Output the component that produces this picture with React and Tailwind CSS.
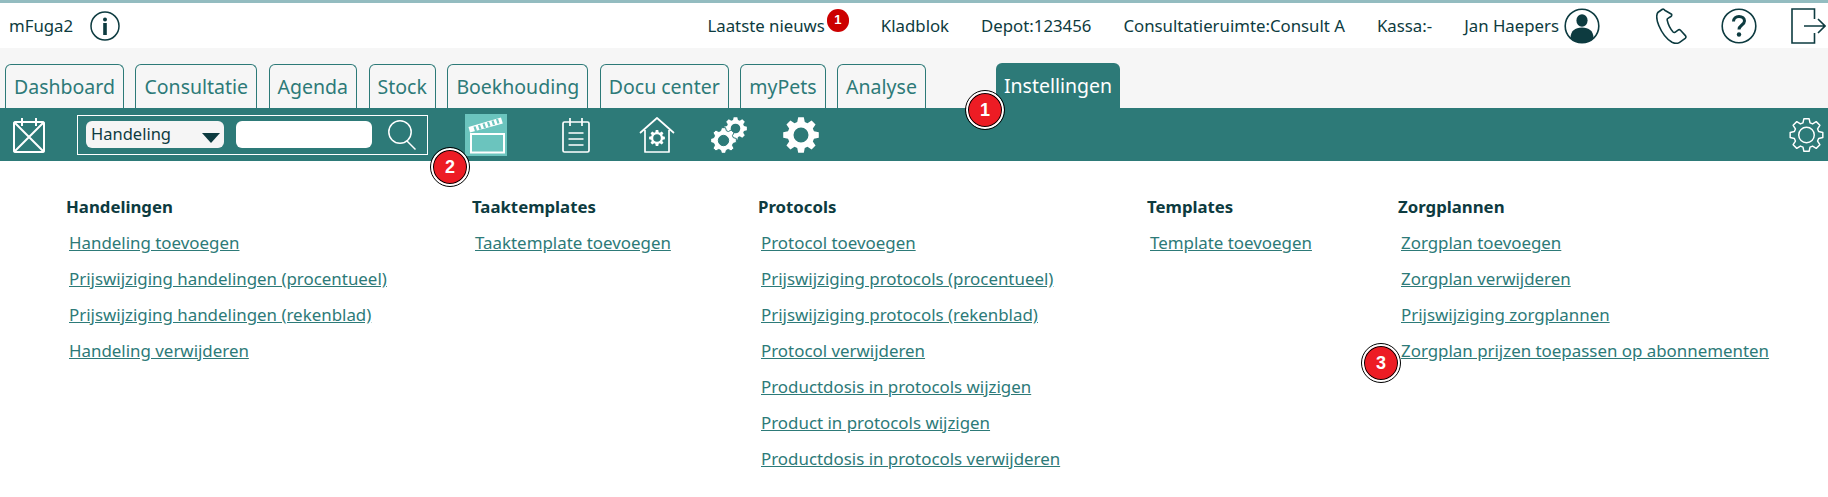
const tabs = [
  "Dashboard",
  "Consultatie",
  "Agenda",
  "Stock",
  "Boekhouding",
  "Docu center",
  "myPets",
  "Analyse",
];

const columns = [
  {
    title: "Handelingen",
    width: "w-[406px]",
    links: [
      "Handeling toevoegen",
      "Prijswijziging handelingen (procentueel)",
      "Prijswijziging handelingen (rekenblad)",
      "Handeling verwijderen",
    ],
  },
  {
    title: "Taaktemplates",
    width: "w-[286px]",
    links: ["Taaktemplate toevoegen"],
  },
  {
    title: "Protocols",
    width: "w-[389px]",
    links: [
      "Protocol toevoegen",
      "Prijswijziging protocols (procentueel)",
      "Prijswijziging protocols (rekenblad)",
      "Protocol verwijderen",
      "Productdosis in protocols wijzigen",
      "Product in protocols wijzigen",
      "Productdosis in protocols verwijderen",
    ],
  },
  {
    title: "Templates",
    width: "w-[251px]",
    links: ["Template toevoegen"],
  },
  {
    title: "Zorgplannen",
    width: "w-[400px]",
    links: [
      "Zorgplan toevoegen",
      "Zorgplan verwijderen",
      "Prijswijziging zorgplannen",
      "Zorgplan prijzen toepassen op abonnementen",
    ],
  },
];

// tooth outline for all the gear icons
function gearPath(cx, cy, outer, inner, teeth) {
  const step = (Math.PI * 2) / teeth;
  let d = "";
  for (let i = 0; i < teeth; i++) {
    const a = i * step - Math.PI / 2;
    const pts = [
      [inner, a - step * 0.36],
      [outer, a - step * 0.2],
      [outer, a + step * 0.2],
      [inner, a + step * 0.36],
    ];
    pts.forEach(([r, t], j) => {
      const x = (cx + r * Math.cos(t)).toFixed(2);
      const y = (cy + r * Math.sin(t)).toFixed(2);
      d += `${i === 0 && j === 0 ? "M" : "L"}${x} ${y} `;
    });
  }
  return d + "Z";
}

function hole(cx, cy, r) {
  return `M${cx - r} ${cy} a${r} ${r} 0 1 0 ${r * 2} 0 a${r} ${r} 0 1 0 ${-r * 2} 0 Z`;
}

function Marker({ n, className }) {
  return (
    <div
      className={`absolute flex h-[38px] w-[38px] items-center justify-center rounded-full border-2 border-white bg-[#ed1c24] font-['Liberation_Sans',sans-serif] text-[18px] font-bold text-white outline outline-1 outline-black ring-1 ring-inset ring-black ${className}`}
    >
      {n}
    </div>
  );
}

function InfoIcon() {
  return (
    <svg width="30" height="30" viewBox="0 0 30 30" fill="none" className="text-[#0d3b40]">
      <circle cx="15" cy="15" r="14" stroke="currentColor" strokeWidth="1.5" />
      <circle cx="15" cy="8.5" r="2" fill="currentColor" />
      <rect x="13.2" y="12" width="3.6" height="12" fill="currentColor" />
    </svg>
  );
}

function UserIcon() {
  return (
    <svg width="36" height="36" viewBox="0 0 36 36" fill="none" className="text-[#0d3b40]">
      <circle cx="18" cy="18" r="16.8" stroke="currentColor" strokeWidth="1.6" />
      <ellipse cx="18" cy="12.5" rx="5.6" ry="6.2" fill="currentColor" />
      <path d="M6.5 30c0-7 4.5-10.5 11.5-10.5S29.500 23 29.500 30c-3 3.200-7 5-11.500 5s-8.500-1.800-11.500-5Z" fill="currentColor" />
    </svg>
  );
}

function PhoneIcon() {
  return (
    <svg width="31" height="36" viewBox="0 0 31 36" fill="none" stroke="#0d3b40" strokeWidth="1.6" strokeLinejoin="round">
      <path d="M6 1.500 1.800 4.500C.2 7 .6 12 2.800 17.500c2.700 6.500 7.700 13.500 13.200 16.800 2.800 1.500 6 1.200 8-.2l5.200-3.800c1-.8 1-1.800.2-2.700l-4.900-5.300c-.8-.8-1.700-.8-2.500-.2l-3 2.200c-.7.4-1.300.3-1.900-.3-2.200-2.400-5.200-8.500-5.900-11.800-.2-.9 0-1.400.7-1.800l3-1.900c.9-.6 1-1.400.7-2.300L8.700 2.300C8.200 1 7 .8 6 1.500Z" />
    </svg>
  );
}

function QuestionIcon() {
  return (
    <svg width="36" height="36" viewBox="0 0 36 36" fill="none" className="text-[#0d3b40]">
      <circle cx="18" cy="18" r="16.800" stroke="currentColor" strokeWidth="1.6" />
      <path d="M12.500 13.500c0-3.200 2.300-5 5.500-5 3.300 0 5.500 1.800 5.500 4.500 0 4-5.500 4-5.500 8.500" stroke="currentColor" strokeWidth="3" />
      <circle cx="18" cy="26.500" r="2.200" fill="currentColor" />
    </svg>
  );
}

function LogoutIcon() {
  return (
    <svg width="35" height="36" viewBox="0 0 35 36" fill="none" stroke="#0d3b40" strokeWidth="1.6">
      <path d="M23.500 11V1H1v34h22.500V25" />
      <path d="M13 18h21M27 11l7 7-7 7" />
    </svg>
  );
}

function CalendarIcon() {
  return (
    <svg width="32" height="36" viewBox="0 0 32 36" fill="none" stroke="white" strokeWidth="2" strokeLinejoin="round">
      <rect x="1" y="5" width="30" height="30" rx="1.500" />
      <path d="M9 1v8M23 1v8M1 5l30 30M31 5 1 35" />
    </svg>
  );
}

function SearchIcon() {
  return (
    <svg width="28" height="30" viewBox="0 0 28 30" fill="none" stroke="white" strokeWidth="1.500">
      <circle cx="12" cy="12" r="11.200" />
      <path d="M19 21l8.500 8.500" />
    </svg>
  );
}

function ClapperIcon() {
  return (
    <svg width="42" height="42" viewBox="0 0 42 42" fill="none">
      <rect width="42" height="42" fill="#6bc4be" />
      <path d="M3.500 13 36 3.500l1.800 6L5 18.500Z" fill="white" />
      <path d="M9.500 12.500 11 17M14 11l1.500 4.500M18.500 9.500l1.500 4.500M23 8l1.500 4.500M27.500 6.500l1.500 4.500M32 5l1.500 4.500" stroke="#6bc4be" strokeWidth="2.200" />
      <rect x="6" y="20" width="33" height="18.500" stroke="white" strokeWidth="2" />
    </svg>
  );
}

function NotepadIcon() {
  return (
    <svg width="28" height="36" viewBox="0 0 28 36" fill="none" stroke="white" strokeWidth="1.700" strokeLinejoin="round">
      <rect x="1" y="5" width="26" height="30" rx="1.500" />
      <path d="M8 1v8M20 1v8M6.500 16h15M6.500 22h15M6.500 28h15" />
    </svg>
  );
}

function HouseIcon() {
  return (
    <svg width="36" height="36" viewBox="0 0 36 36" fill="none">
      <path d="M1 16 18 1l17 15M6 13v22h24V13" stroke="white" strokeWidth="1.700" strokeLinejoin="round" />
      <path d={gearPath(18, 21, 8, 6, 8) + hole(18, 21, 3.800)} fill="white" fillRule="evenodd" />
    </svg>
  );
}

function DoubleGearIcon() {
  return (
    <svg width="36" height="36" viewBox="0 0 36 36">
      <path d={gearPath(24.500, 11.500, 11.500, 8.800, 8) + hole(24.500, 11.500, 4.800)} fill="white" fillRule="evenodd" />
      <path d={gearPath(12.500, 23.500, 13, 10.200, 8) + hole(12.500, 23.500, 5.200)} fill="white" fillRule="evenodd" stroke="#2d7a78" strokeWidth="1" />
    </svg>
  );
}

function GearIcon() {
  return (
    <svg width="36" height="36" viewBox="0 0 36 36">
      <path d={gearPath(18, 18, 18, 13.500, 8) + hole(18, 18, 7.500)} fill="white" fillRule="evenodd" />
    </svg>
  );
}

function OutlineGearIcon() {
  return (
    <svg width="35" height="36" viewBox="0 0 36 36" fill="none" stroke="white" strokeWidth="1.500" strokeLinejoin="round">
      <path d={gearPath(18, 18, 17, 13, 8)} />
      <circle cx="18" cy="18" r="8" />
    </svg>
  );
}

function App() {
  return (
    <div className="relative min-h-[497px] bg-white font-['Noto_Sans',sans-serif] text-[#0d3b40]">
      <header className="flex h-[48px] items-center border-t-[3px] border-[#93bcc0] pl-[9px] pr-[2px] text-[16.800px]">
        <span>mFuga2</span>
        <span className="ml-[17px] flex"><InfoIcon /></span>
        <div className="ml-auto flex items-center gap-8">
          <div className="flex items-center gap-[2px]">
            <span>Laatste nieuws</span>
            <span className="mb-[11px] flex h-[23px] w-[22px] items-center justify-center rounded-full bg-[#cc0000] font-['Liberation_Sans',sans-serif] text-[13px] font-bold text-white">1</span>
          </div>
          <span>Kladblok</span>
          <span>Depot:123456</span>
          <span>Consultatieruimte:Consult A</span>
          <span>Kassa:-</span>
          <div className="flex items-center gap-[5px]">
            <span>Jan Haepers</span>
            <UserIcon />
          </div>
          <div className="ml-6 flex items-center gap-[34px]">
            <PhoneIcon />
            <QuestionIcon />
            <LogoutIcon />
          </div>
        </div>
      </header>

      <nav className="flex h-[60px] items-end bg-[#f6f6f6] pl-[5px] text-[19.500px]">
        <div className="flex items-end gap-[11.500px]">
          {tabs.map((t) => (
            <a key={t} className="flex h-[44px] items-center rounded-t-[6px] border border-b-0 border-[#2d7a78] px-2 text-[#2d7a78]">
              {t}
            </a>
          ))}
        </div>
        <a className="ml-[70px] flex h-[45px] items-center rounded-t-[6px] bg-[#2d7a78] px-2 text-white">
          Instellingen
        </a>
      </nav>

      <div className="flex h-[53px] items-center bg-[#2d7a78] pl-[13px] pr-1">
        <CalendarIcon />
        <div className="ml-8 flex h-[40px] w-[351px] items-center border border-white pl-2">
          <div className="relative h-[27px] w-[138px]">
            <select className="h-full w-full appearance-none rounded-[6px] bg-[#f5f5f5] pl-[5px] text-[16.500px] text-[#0d3b40]">
              <option>Handeling</option>
            </select>
            <span className="absolute right-1 top-3 h-0 w-0 border-x-[9px] border-t-[10px] border-x-transparent border-t-[#0d3b40]" />
          </div>
          <input className="ml-3 h-[27px] w-[136px] rounded-[6px] bg-white" />
          <span className="ml-4 flex"><SearchIcon /></span>
        </div>
        <span className="ml-[37px] flex"><ClapperIcon /></span>
        <span className="ml-[55px] flex"><NotepadIcon /></span>
        <span className="ml-[49px] flex"><HouseIcon /></span>
        <span className="ml-9 flex"><DoubleGearIcon /></span>
        <span className="ml-9 flex"><GearIcon /></span>
        <span className="ml-auto flex"><OutlineGearIcon /></span>
      </div>

      <main className="flex pl-[66px] pt-[34px]">
        {columns.map((c) => (
          <section key={c.title} className={c.width}>
            <h3 className="text-[16.800px] font-bold leading-[24px]">{c.title}</h3>
            <ul className="mt-[12px] flex flex-col gap-[12px] pl-[3px]">
              {c.links.map((l) => (
                <li key={l} className="h-[24px] text-[16.900px] leading-[24px]">
                  <a className="text-[#2d7a78] underline">{l}</a>
                </li>
              ))}
            </ul>
          </section>
        ))}
      </main>

      <Marker n="1" className="left-[966px] top-[91px]" />
      <Marker n="2" className="left-[431px] top-[148px]" />
      <Marker n="3" className="left-[1362px] top-[344px]" />
    </div>
  );
}

export default App;
